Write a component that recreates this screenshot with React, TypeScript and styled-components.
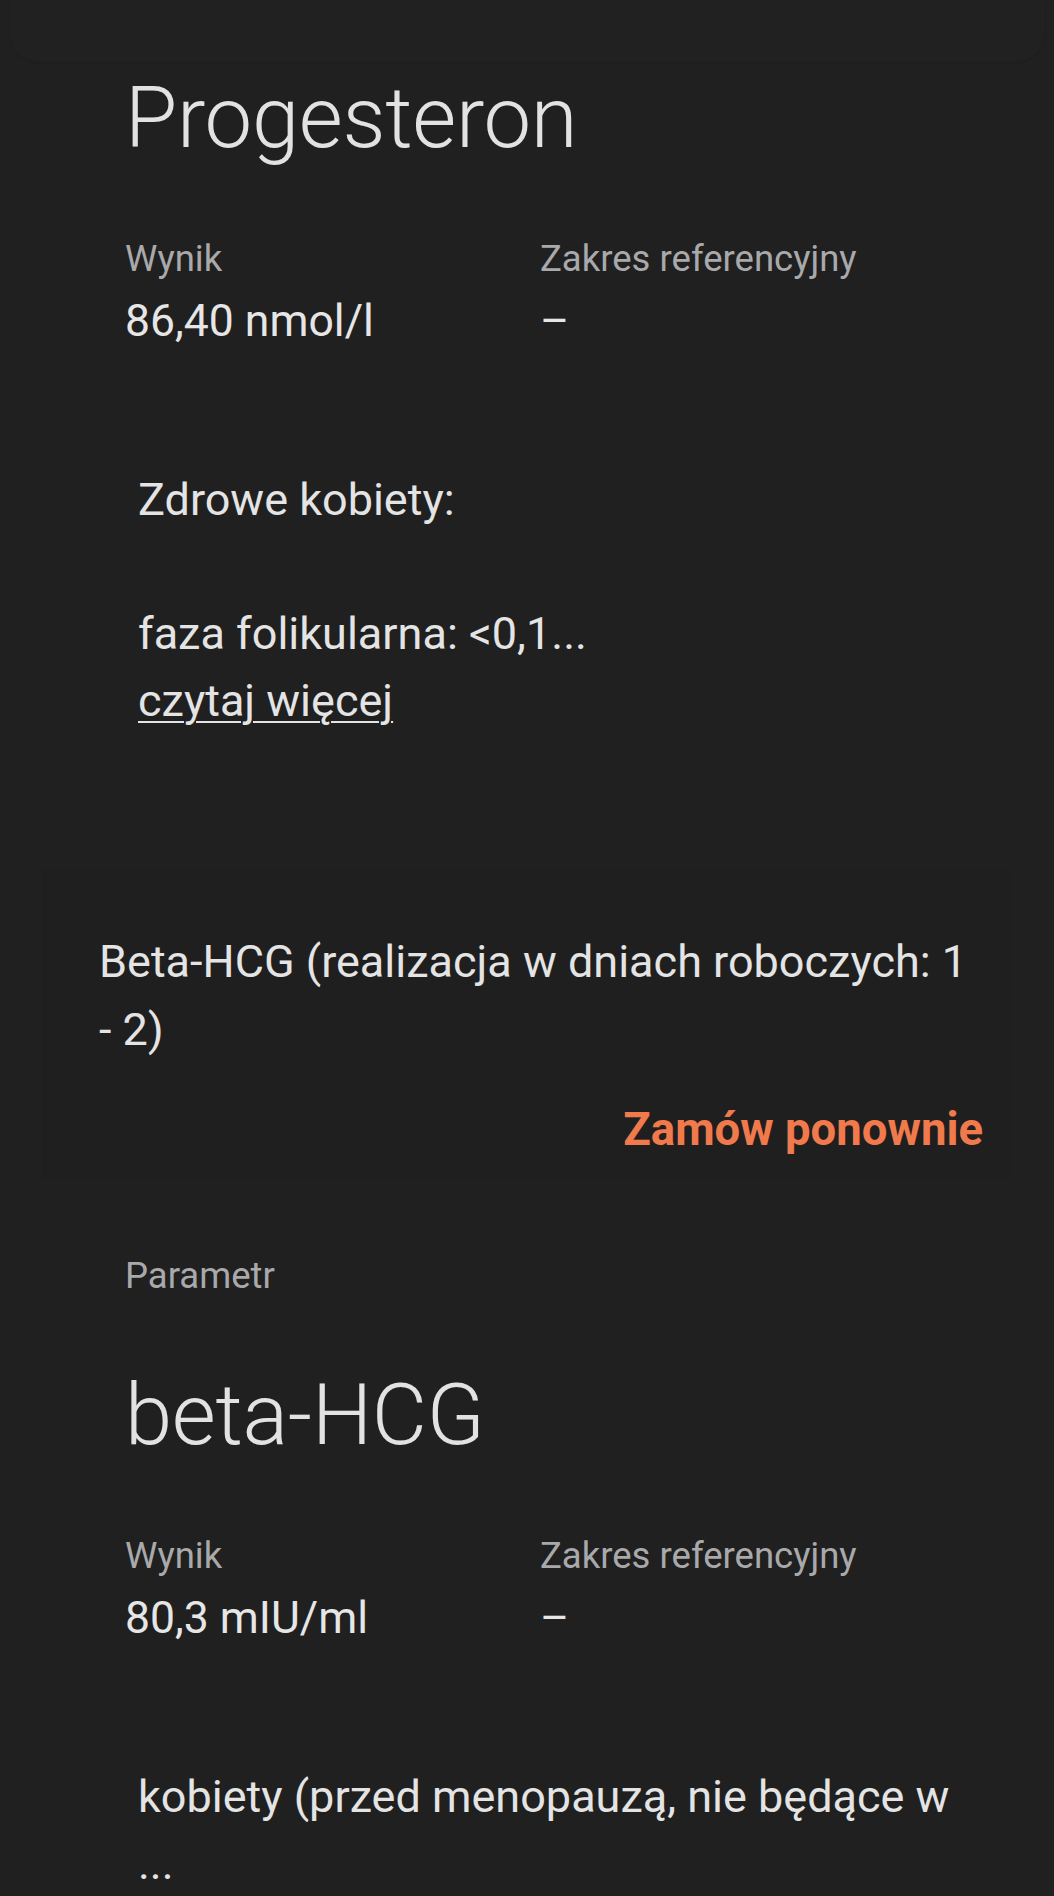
import styled, { createGlobalStyle } from 'styled-components';

const GlobalStyle = createGlobalStyle`
  html, body {
    margin: 0;
    padding: 0;
    background-color: #202020;
    font-family: Roboto, "Noto Sans", "Liberation Sans", sans-serif;
    color: #e4e4e4;
    overflow: hidden;
  }
  #root {
    min-height: 1896px;
  }
`;

const Page = styled.div`
  display: flex;
  flex-direction: column;
  background-color: #202020;
  min-height: 1896px;
`;

// bottom edge of the previous card, barely visible
const PrevCard = styled.div`
  height: 62px;
  margin: 0 10px;
  background-color: #212121;
  border-radius: 0 0 28px 28px;
  box-shadow: 0 1px 2px rgba(0, 0, 0, 0.1);
`;

const Section = styled.section<{ top: number }>`
  display: flex;
  flex-direction: column;
  padding: ${(p) => p.top}px 80px 0 125px;
`;

const FieldLabel = styled.div`
  font-size: 36.5px;
  line-height: 44px;
  color: #a9a9ab;
`;

const Title = styled.h1<{ gap: number }>`
  margin: ${(p) => p.gap}px 0 0;
  font-size: 85px;
  line-height: 100px;
  font-weight: 300;
  color: #e2e2e2;
  letter-spacing: -0.3px;
`;

const ResultGrid = styled.div`
  display: grid;
  grid-template-columns: 415px 1fr;
  margin-top: 69px;
`;

const ResultCell = styled.div`
  display: flex;
  flex-direction: column;
  gap: 12px;
`;

const Value = styled.div`
  font-size: 44.5px;
  line-height: 56px;
  color: #e6e6e6;
`;

const Description = styled.p`
  margin: 117px 0 0;
  padding-left: 13px;
  font-size: 45px;
  line-height: 67px;
  color: #e4e4e4;
`;

const MoreLink = styled.a`
  color: #e4e4e4;
  text-decoration: underline;
  text-decoration-thickness: 2px;
  text-underline-offset: 5px;
`;

const OrderCard = styled.div`
  display: flex;
  flex-direction: column;
  margin: 136px 45px 0;
  padding: 58px 26px 20px 54px;
  background-color: #1f1f1f;
  box-shadow: 0 0 2px rgba(0, 0, 0, 0.15);
`;

const OrderTitle = styled.div`
  padding-right: 9px;
  font-size: 45px;
  line-height: 68px;
  color: #e4e4e4;
`;

const OrderRow = styled.div`
  display: flex;
  justify-content: flex-end;
  margin-top: 38px;
`;

const OrderButton = styled.button`
  border: none;
  background: none;
  padding: 0;
  font-family: inherit;
  font-size: 45.5px;
  line-height: 56px;
  font-weight: 700;
  color: #f07a4c;
  cursor: pointer;
`;

interface IResultProps {
  value: string;
}

const Results = ({ value }: IResultProps) => (
  <ResultGrid>
    <ResultCell>
      <FieldLabel>Wynik</FieldLabel>
      <Value>{value}</Value>
    </ResultCell>
    <ResultCell>
      <FieldLabel>Zakres referencyjny</FieldLabel>
      <Value>–</Value>
    </ResultCell>
  </ResultGrid>
);

const App = () => {
  return (
    <>
      <GlobalStyle />
      <Page>
        <PrevCard />
        <Section top={6}>
          <Title gap={0}>Progesteron</Title>
          <Results value="86,40 nmol/l" />
          <Description>
            Zdrowe kobiety:
            <br />
            <br />
            faza folikularna: &lt;0,1...
            <br />
            <MoreLink href="#">czytaj więcej</MoreLink>
          </Description>
        </Section>

        <OrderCard>
          <OrderTitle>Beta-HCG (realizacja w dniach roboczych: 1 - 2)</OrderTitle>
          <OrderRow>
            <OrderButton>Zamów ponownie</OrderButton>
          </OrderRow>
        </OrderCard>

        <Section top={76}>
          <FieldLabel>Parametr</FieldLabel>
          <Title gap={67}>beta-HCG</Title>
          <Results value="80,3 mIU/ml" />
          <Description>kobiety (przed menopauzą, nie będące w ...</Description>
        </Section>
      </Page>
    </>
  );
};

export default App;
